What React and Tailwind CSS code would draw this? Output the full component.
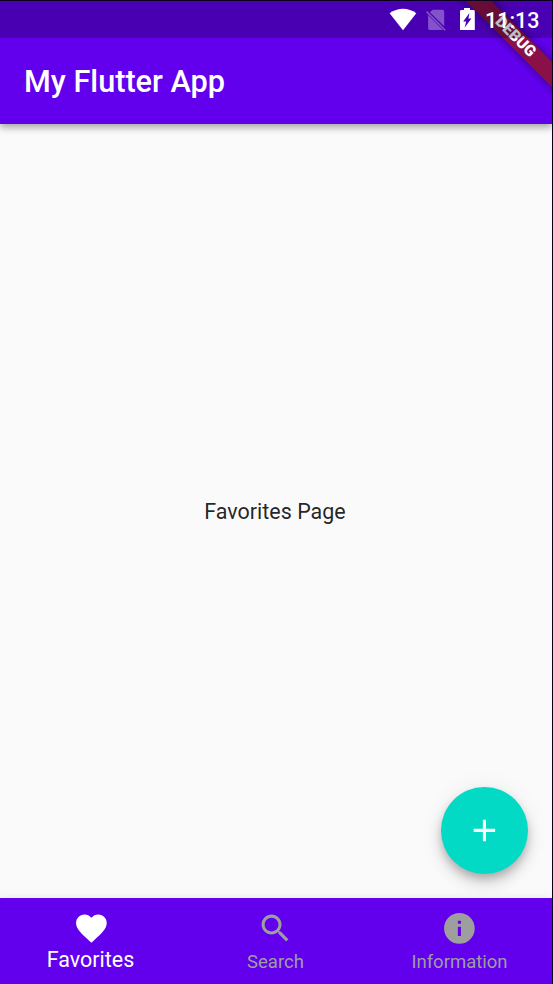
function StatusBar() {
  return (
    <div className="absolute inset-x-0 top-0 h-[37px] bg-black/25 text-white">
      <svg className="absolute inset-0" width="552" height="37" viewBox="0 1 552 37">
        <path d="M389.6 13.2C397.5 7.2 408.5 7.2 416.3 13.2L403 30.2Z" fill="#fff" />
        <g opacity=".32">
          <path d="M432.8 9.8H442.4Q444.2 9.8 444.2 11.6V26.2L429.9 12.2Z" fill="#fff" />
          <path d="M428.1 14.9L443 30H429.9Q428.1 30 428.1 28.2Z" fill="#fff" />
          <path d="M426.6 11.6L445.2 30.2" stroke="#fff" strokeWidth="1.6" />
        </g>
        <path fillRule="evenodd" d="M464 8H470V10H473.4Q474.8 10 474.8 11.4V30H460V11.4Q460 10 461.4 10H464ZM469.4 13L463.2 21.4H466.2L464.6 27.8L471.4 18.4H468.4Z" fill="#fff" />
      </svg>
      <span className="absolute top-[7px] left-[485px] text-[21.5px] leading-[25px] font-medium">11:13</span>
    </div>
  );
}

function DebugBanner() {
  return (
    <div className="absolute top-0 right-0 h-0 w-0 rotate-45">
      <div className="absolute top-[42.5px] -left-[70px] flex h-[18.4px] w-[140px] items-center justify-center bg-[#8a1148] pr-[1px] pt-px text-[15.6px] leading-none font-black text-white shadow-[0_0_9px_rgba(0,0,0,0.5)]">
        DEBUG
      </div>
    </div>
  );
}

function NavItem({ label, path, active }) {
  return (
    <button className={`flex w-[184px] flex-col items-center pt-[12px] ${active ? "text-white" : "text-[#9e9e9e]"}`}>
      <svg width="36.8" height="36.8" viewBox="0 0 24 24" fill="currentColor">
        <path d={path} />
      </svg>
      <span className={active ? "mt-[0.5px] mr-px text-[21.47px] leading-[25px]" : "mt-[3.5px] ml-px text-[18.5px] leading-[24px]"}>{label}</span>
    </button>
  );
}

const heart = "M12 21.35l-1.45-1.32C5.4 15.36 2 12.28 2 8.5 2 5.42 4.42 3 7.5 3c1.74 0 3.41.81 4.5 2.09C13.09 3.81 14.76 3 16.5 3 19.58 3 22 5.42 22 8.5c0 3.78-3.4 6.86-8.55 11.54L12 21.35z";
const search = "M15.5 14h-.79l-.28-.27C15.41 12.59 16 11.11 16 9.5 16 5.91 13.09 3 9.5 3S3 5.91 3 9.5 5.91 16 9.5 16c1.61 0 3.09-.59 4.23-1.57l.27.28v.79l5 4.99L20.49 19l-4.99-5zm-6 0C7.01 14 5 11.99 5 9.5S7.01 5 9.5 5 14 7.01 14 9.5 11.99 14 9.5 14z";
const info = "M12 2C6.48 2 2 6.48 2 12s4.48 10 10 10 10-4.48 10-10S17.52 2 12 2zm1 15h-2v-6h2v6zm0-8h-2V7h2v2z";

export default function App() {
  return (
    <div className="h-[984px] w-[553px] bg-[#08001c] pt-px pr-px font-[Roboto,sans-serif]">
      <div className="relative flex h-[983px] w-[552px] flex-col overflow-hidden bg-[#fafafa]">
        <header className="z-10 h-[123px] shrink-0 bg-[#6200ee] pt-[37px] shadow-[0_3px_6px_rgba(0,0,0,0.17),0_5px_8px_rgba(0,0,0,0.12),0_1px_10px_rgba(0,0,0,0.1)]">
          <h1 className="flex h-[86px] items-center pt-[2px] pl-[24px] text-[30.67px] font-medium text-white">My Flutter App</h1>
        </header>
        <main className="relative flex flex-1 items-center justify-center text-[21.47px] text-black/87">
          <p className="pt-[2px] pr-[2px]">Favorites Page</p>
          <button aria-label="Add" className="absolute right-[24.5px] bottom-[24.4px] flex h-[86.4px] w-[86.4px] items-center justify-center rounded-full bg-[#03dac6] text-white shadow-[0_5px_8px_-1px_rgba(0,0,0,0.2),0_9px_15px_rgba(0,0,0,0.14),0_2px_27px_rgba(0,0,0,0.06)]">
            <svg width="36.8" height="36.8" viewBox="0 0 24 24" fill="currentColor"><path d="M19 13h-6v6h-2v-6H5v-2h6V5h2v6h6v2z" /></svg>
          </button>
        </main>
        <nav className="z-10 -ml-px flex h-[86px] shrink-0 items-start bg-[#6200ee] shadow-[0_0_10px_rgba(0,0,0,0.08)]">
          <NavItem label="Favorites" path={heart} active />
          <NavItem label="Search" path={search} />
          <NavItem label="Information" path={info} />
        </nav>
        <div className="pointer-events-none absolute inset-0 z-20 overflow-hidden">
          <DebugBanner />
          <StatusBar />
        </div>
      </div>
    </div>
  );
}
